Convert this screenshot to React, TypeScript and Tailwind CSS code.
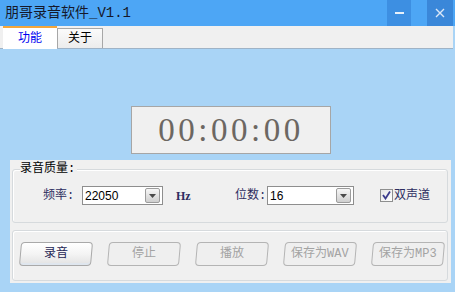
const FONT = "font-['Liberation_Mono','Noto_Sans_CJK_SC',monospace]";

function Select({ value, width }: { value: string; width: string }) {
  return (
    <div className={`${width} h-[19px] border border-[#8e8e8e] bg-white flex items-center justify-between pl-[2px] pr-[2px]`}>
      <span className="font-['Liberation_Sans',sans-serif] text-[12px] text-black leading-none">{value}</span>
      <div className="w-[15px] h-[15px] border border-[#9c9c9c] rounded-[2px] bg-gradient-to-b from-[#f7f7f7] to-[#cfcfcf] flex items-center justify-center">
        <svg width="7" height="4" viewBox="0 0 7 4">
          <path d="M0 0 L7 0 L3.5 4 Z" fill="#4a4a4a" />
        </svg>
      </div>
    </div>
  );
}

function Btn({ label, enabled }: { label: string; enabled?: boolean }) {
  return (
    <div
      className={`w-[72px] h-[24px] -skew-x-[5deg] rounded-[4px] border flex items-center justify-center ${
        enabled
          ? "border-[#a9a9a9] bg-gradient-to-b from-white via-[#f4f4f4] to-[#e2e2e2] shadow-[inset_0_-2px_0_#dfe6ee]"
          : "border-[#b4b4b4] bg-[#efefef]"
      }`}
    >
      <span
        className={`skew-x-[5deg] text-[12px] leading-none ${FONT} ${
          enabled ? "text-[#1f1f55]" : "text-[#a3a3a3]"
        }`}
      >
        {label}
      </span>
    </div>
  );
}

export default function App() {
  return (
    <div className={`w-[455px] h-[292px] overflow-hidden bg-[#a9d4f6] flex flex-col ${FONT}`}>
      {/* title bar */}
      <div className="h-[26px] bg-[#4da6f5] flex items-center shrink-0">
        <span className="pl-[5px] text-[14px] leading-none text-[#15182a]">朋哥录音软件_V1.1</span>
        <div className="ml-auto flex h-full">
          <div className="w-[24px] h-full bg-[#3d8fe2] flex items-center justify-center">
            <div className="w-[9px] h-[2px] bg-[#e8f1fb]" />
          </div>
          <div className="w-[16px]" />
          <div className="w-[26px] h-full bg-[#3a87d9] flex items-center justify-center">
            <svg width="10" height="10" viewBox="0 0 10 10">
              <path d="M1 1 L9 9 M9 1 L1 9" stroke="#dbe8f8" strokeWidth="1.4" />
            </svg>
          </div>
          <div className="w-[2px]" />
        </div>
      </div>

      {/* tabs */}
      <div className="h-[23px] mr-[2px] bg-[#f0f0f0] border-b border-[#9fb3c6] flex items-end pl-[3px] shrink-0">
        <div className="w-[54px] h-[23px] -mb-px bg-white border-t-2 border-[#f4a63a] flex items-center justify-center">
          <span className="text-[12px] leading-none text-[#0000f0]">功能</span>
        </div>
        <div className="w-[46px] h-[20px] border border-b-0 border-[#a7a7a7] bg-gradient-to-b from-[#fbfbfb] to-[#ececec] flex items-center justify-center">
          <span className="text-[12px] leading-none text-black">关于</span>
        </div>
      </div>

      {/* body */}
      <div className="flex-1">
        <div className="ml-[131px] mt-[57px] w-[200px] h-[48px] border border-[#a6a6a6] bg-[#f0f0f0] flex items-center justify-center">
          <span className="font-['Liberation_Serif',serif] text-[33px] leading-none tracking-[3.5px] text-[#6c6762]">
            00:00:00
          </span>
        </div>

        <div className="ml-[10px] mt-[6px] w-[441px] h-[123px] bg-[#f0f0f0] pt-[9px] pl-[2px] pr-[3px]">
          {/* quality group */}
          <div className="relative h-[54px] border border-[#d6dadd] rounded-[3px] shadow-[inset_1px_1px_0_#ffffff]">
            <span className="absolute -top-[7px] left-[7px] bg-[#f0f0f0] pr-[2px] text-[12px] leading-none text-black">
              录音质量:
            </span>
            <div className="flex items-center pt-[16px] pl-[30px]">
              <span className="w-[39px] text-[12px] leading-none text-[#2d2d60]">频率:</span>
              <Select value="22050" width="w-[81px]" />
              <span className="ml-[13px] w-[59px] font-['Liberation_Serif',serif] text-[12px] leading-none text-[#2d2d60] font-bold">Hz</span>
              <span className="w-[32px] text-[12px] leading-none text-[#2d2d60]">位数:</span>
              <Select value="16" width="w-[87px]" />
              <div className="ml-[26px] flex items-center">
                <div className="w-[13px] h-[13px] border border-[#8e8f8f] bg-gradient-to-br from-[#e6e6e6] to-white flex items-center justify-center">
                  <svg width="9" height="9" viewBox="0 0 9 9">
                    <path d="M1 4 L3.5 7.5 L8 0.5" stroke="#3c3c8c" strokeWidth="1.8" fill="none" />
                  </svg>
                </div>
                <span className="ml-[1px] text-[12px] leading-none text-[#2d2d60]">双声道</span>
              </div>
            </div>
          </div>

          {/* buttons group */}
          <div className="mt-[7px] h-[51px] border border-[#d6dadd] rounded-[3px] shadow-[inset_1px_1px_0_#ffffff] flex items-start gap-[16px] pt-[11px] pl-[7px]">
            <Btn label="录音" enabled />
            <Btn label="停止" />
            <Btn label="播放" />
            <Btn label="保存为WAV" />
            <Btn label="保存为MP3" />
          </div>
        </div>
      </div>
    </div>
  );
}
